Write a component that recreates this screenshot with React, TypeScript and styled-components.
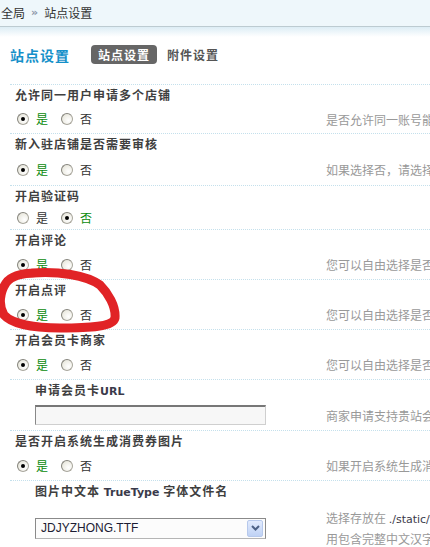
import React from "react";
import styled, { createGlobalStyle } from "styled-components";

const GlobalStyle = createGlobalStyle`
  html, body {
    margin: 0;
    padding: 0;
    overflow: hidden;
    background: #fff;
  }
  body {
    font-family: "Noto Sans CJK SC", "Liberation Sans", sans-serif;
    font-size: 12px;
    color: #333;
  }
`;

const Page = styled.div`
  position: relative;
  width: 760px;
`;

const TopBar = styled.div`
  height: 26px;
  line-height: 26px;
  padding-left: 1px;
  background: #eef7fb;
  border-bottom: 1px solid #bccbd1;
  color: #333;
  display: flex;
  align-items: center;
  gap: 6px;
`;

const Crumb = styled.span`
  color: #8b96a8;
  font-family: "DejaVu Sans", sans-serif;
  font-size: 11px;
  font-weight: bold;
`;

const Fade = styled.div`
  height: 10px;
  background: linear-gradient(#dcedf5, #ffffff);
`;

const TitleRow = styled.div`
  display: flex;
  align-items: center;
  height: 19px;
  margin: 8px 0 20px 10px;
`;

const Title = styled.h2`
  margin: 0 21px 0 0;
  font-size: 14px;
  font-weight: bold;
  letter-spacing: 1px;
  color: #1590c9;
`;

const Tab = styled.span<{ active?: boolean }>`
  height: 19px;
  line-height: 19px;
  padding: 0 ${(p) => (p.active ? "7px" : "0")};
  margin-right: 10px;
  border-radius: 4px;
  font-weight: bold;
  letter-spacing: 1px;
  background: ${(p) => (p.active ? "#666" : "transparent")};
  color: ${(p) => (p.active ? "#fff" : "#555")};
`;

const Settings = styled.div`
  margin-left: 10px;
`;

const Block = styled.div`
  border-top: 1px dotted #c4e0ec;
`;

const Label = styled.div<{ sub?: boolean }>`
  height: 20px;
  line-height: 20px;
  padding-left: ${(p) => (p.sub ? "25px" : "5px")};
  font-weight: bold;
  letter-spacing: 1px;
  color: #3f3f3f;
`;

const Latin = styled.span`
  font-family: "DejaVu Sans", sans-serif;
  font-size: 11px;
  letter-spacing: 0;
  color: #3a3a4a;
`;

const ValueRow = styled.div<{ h: number }>`
  display: grid;
  grid-template-columns: 316px 1fr;
  align-items: center;
  height: ${(p) => p.h}px;
`;

const Options = styled.div`
  display: flex;
  align-items: center;
  padding-left: 7px;
`;

const Radio = styled.span<{ checked?: boolean }>`
  position: relative;
  width: 10px;
  height: 10px;
  border-radius: 50%;
  border: 1px solid #a8a69c;
  border-top-color: #85847c;
  border-left-color: #85847c;
  background: radial-gradient(circle at 65% 65%, #ffffff 0%, #eeede5 60%, #d8d6cc 100%);
  margin-right: 7px;
  &::after {
    content: "";
    display: ${(p) => (p.checked ? "block" : "none")};
    position: absolute;
    left: 3px;
    top: 3px;
    width: 4px;
    height: 4px;
    border-radius: 50%;
    background: #000;
  }
`;

const OptText = styled.span<{ checked?: boolean }>`
  color: ${(p) => (p.checked ? "#0a8a0a" : "#333")};
  margin-right: 13px;
  line-height: 14px;
`;

const Desc = styled.div`
  color: #999;
  white-space: nowrap;
  line-height: 19px;
`;

const TextInput = styled.input`
  box-sizing: border-box;
  margin-left: 25px;
  width: 231px;
  height: 20px;
  border: 1px solid #cfcfcf;
  border-top: 2px solid #777;
  border-left: 1px solid #888;
  background: #f7f7f7;
  padding: 0 3px;
  font-size: 12px;
`;

const SelectBox = styled.div`
  box-sizing: border-box;
  margin-left: 25px;
  width: 231px;
  height: 21px;
  border: 1px solid #8a8a8a;
  border-bottom-color: #b5b5b5;
  background: #fcfcfc;
  display: flex;
  align-items: center;
  justify-content: space-between;
  padding: 0 2px 0 5px;
`;

const SelectText = styled.span`
  font-family: "Liberation Sans", sans-serif;
  font-size: 12px;
  color: #1c1c34;
`;

const DropButton = styled.span`
  width: 16px;
  height: 17px;
  border: 1px solid #b7c9ec;
  border-radius: 2px;
  background: linear-gradient(#e2ebfd, #bfd2f5);
  display: flex;
  align-items: center;
  justify-content: center;
  box-sizing: border-box;
`;

const Mark = styled.svg`
  position: absolute;
  left: 0;
  top: 255px;
  pointer-events: none;
`;

type Opt = { yes: boolean };

function YesNo({ yes }: Opt) {
  return (
    <Options>
      <Radio checked={yes} />
      <OptText checked={yes}>是</OptText>
      <Radio checked={!yes} />
      <OptText checked={!yes}>否</OptText>
    </Options>
  );
}

const rows = [
  { label: "允许同一用户申请多个店铺", yes: true, h: 28, desc: "是否允许同一账号能开设多个店铺" },
  { label: "新入驻店铺是否需要审核", yes: true, h: 31, desc: "如果选择否，请选择店铺默认状态" },
  { label: "开启验证码", yes: false, h: 23, desc: "" },
  { label: "开启评论", yes: true, h: 29, desc: "您可以自由选择是否开启评论功能" },
  { label: "开启点评", yes: true, h: 29, desc: "您可以自由选择是否开启点评功能" },
  { label: "开启会员卡商家", yes: true, h: 29, desc: "您可以自由选择是否开启会员卡商家" },
];

export default function App() {
  return (
    <Page>
      <GlobalStyle />
      <TopBar>
        <span>全局</span>
        <Crumb>»</Crumb>
        <span>站点设置</span>
      </TopBar>
      <Fade />
      <TitleRow>
        <Title>站点设置</Title>
        <Tab active>站点设置</Tab>
        <Tab>附件设置</Tab>
      </TitleRow>
      <Settings>
        {rows.map((r) => (
          <Block key={r.label}>
            <Label>{r.label}</Label>
            <ValueRow h={r.h}>
              <YesNo yes={r.yes} />
              <Desc>{r.desc}</Desc>
            </ValueRow>
          </Block>
        ))}
        <Block>
          <Label sub>
            申请会员卡<Latin>URL</Latin>
          </Label>
          <ValueRow h={30}>
            <TextInput />
            <Desc>商家申请支持贵站会员卡的链接地址</Desc>
          </ValueRow>
        </Block>
        <Block>
          <Label>是否开启系统生成消费券图片</Label>
          <ValueRow h={29}>
            <YesNo yes />
            <Desc>如果开启系统生成消费券图片功能</Desc>
          </ValueRow>
        </Block>
        <Block>
          <Label sub>
            图片中文本 <Latin>TrueType</Latin> 字体文件名
          </Label>
          <ValueRow h={54}>
            <SelectBox>
              <SelectText>JDJYZHONG.TTF</SelectText>
              <DropButton>
                <svg width="9" height="6" viewBox="0 0 9 6">
                  <path d="M1 1 L4.5 4.5 L8 1" fill="none" stroke="#4d6185" strokeWidth="2" />
                </svg>
              </DropButton>
            </SelectBox>
            <Desc>
              选择存放在 <Latin>./static/font/</Latin> 目录下的字体文件，请使
              <br />
              用包含完整中文汉字的字体文件
            </Desc>
          </ValueRow>
        </Block>
      </Settings>
      <Mark width="130" height="80" viewBox="0 255 130 80">
        <path
          d="M32 273 C58 271 86 275 100 285 C108 293 116 306 115 318 C113 327 90 328 60 328 C35 328 12 324 4 315 C-2 305 0 292 6 283 C11 276 22 273 36 273"
          fill="none"
          stroke="#e12326"
          strokeWidth="9"
          strokeLinecap="round"
        />
      </Mark>
    </Page>
  );
}
